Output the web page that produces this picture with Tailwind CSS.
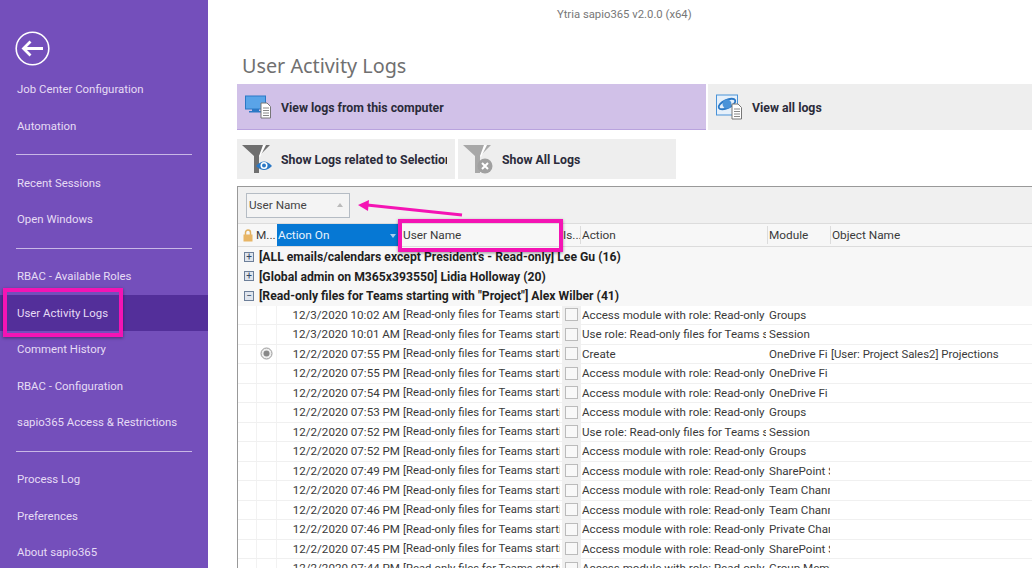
<!DOCTYPE html>
<html>

<head>
  <meta charset="utf-8">
  <script src="https://cdn.jsdelivr.net/npm/@tailwindcss/browser@4"></script>
  <title>User Activity Logs</title>
</head>

<body class="overflow-hidden">
  <div class="relative flex h-[568px] w-[1032px] overflow-hidden bg-white font-['Roboto',sans-serif] text-[11.6px] text-[#3a3a3a]">

    <!-- sidebar -->
    <div class="flex h-full w-[208px] shrink-0 flex-col overflow-hidden bg-[#744fbb] text-[11.4px] text-[#e6dcf5] *:shrink-0">
      <div class="h-[71px] pt-[31px] pl-[15px]">
        <svg width="35" height="35" viewBox="0 0 35 35" fill="none" stroke="#fff">
          <circle cx="17.5" cy="17.5" r="16.3" stroke-width="1.6" />
          <path d="M8 17.5H28M15.5 10.5L8.5 17.5L15.5 24.5" stroke-width="2.8" />
        </svg>
      </div>
      <div class="flex h-[36.5px] items-center pl-[17px]">Job Center Configuration</div>
      <div class="flex h-[36.5px] items-center pl-[17px] pt-[2px]">Automation</div>
      <div class="mx-[16px] my-[10px] h-px bg-[#c9b8e6]"></div>
      <div class="flex h-[36.5px] items-center pl-[17px]">Recent Sessions</div>
      <div class="flex h-[36.5px] items-center pl-[17px]">Open Windows</div>
      <div class="mx-[16px] mt-[10px] mb-[9px] h-px bg-[#c9b8e6]"></div>
      <div class="flex h-[36.5px] items-center pl-[17px]">RBAC - Available Roles</div>
      <div class="flex h-[36.5px] items-center bg-[#532f9a] pl-[17px] pt-[2px]">User Activity Logs</div>
      <div class="flex h-[36.5px] items-center pl-[17px]">Comment History</div>
      <div class="flex h-[36.5px] items-center pl-[17px] pt-[2px]">RBAC - Configuration</div>
      <div class="flex h-[36.5px] items-center pl-[17px]">sapio365 Access &amp; Restrictions</div>
      <div class="mx-[16px] my-[10px] h-px bg-[#c9b8e6]"></div>
      <div class="flex h-[36.5px] items-center pl-[17px]">Process Log</div>
      <div class="flex h-[36.5px] items-center pl-[17px]">Preferences</div>
      <div class="flex h-[36.5px] items-center pl-[17px]">About sapio365</div>
    </div>

    <!-- main -->
    <div class="flex min-w-0 flex-1 flex-col overflow-hidden pl-[29px] *:shrink-0">
      <div class="h-[27px] pl-[320px] pt-[7px] text-[11.3px] text-[#777]">Ytria sapio365 v2.0.0 (x64)</div>
      <div class="h-[57px] pl-[5px] pt-[26px] font-['Noto_Sans',sans-serif] text-[19.8px] leading-[26px] text-[#707070]">User Activity Logs</div>

      <div class="flex h-[46px] gap-[2px] text-[12.3px] font-bold text-[#2b2b3a]">
        <div class="flex w-[469px] shrink-0 items-center border-b border-[#b9a3de] bg-[#d1c1e8] pl-[8px]">
          <svg width="27" height="24" viewBox="0 0 27 24" class="mr-[9px]">
            <rect x="0.5" y="1" width="20" height="13" fill="#5aa4e8" stroke="#2b78c5" />
            <rect x="7" y="14" width="7" height="2" fill="#2b78c5" />
            <rect x="4" y="16" width="13" height="1.5" fill="#2b78c5" />
            <path d="M16 8H22L25.5 11.5V23H16Z" fill="#fff" stroke="#777" />
            <path d="M18 13H24M18 15.5H24M18 18H24M18 20.5H24" stroke="#888" />
          </svg>
          <span class="pt-[3px]">View logs from this computer</span>
        </div>
        <div class="flex flex-1 items-center bg-[#eeeeee] pl-[8px]">
          <svg width="27" height="26" viewBox="0 0 27 26" class="mr-[9px]">
            <rect x="0.5" y="1" width="21" height="20" fill="#e6f0fa" stroke="#4a93d8" />
            <ellipse cx="11" cy="10" rx="9" ry="4" transform="rotate(-25 11 10)" fill="none" stroke="#2b78c5" stroke-width="1.8" />
            <circle cx="11" cy="10" r="4.5" fill="#4a93d8" />
            <path d="M16 10H22L25.5 13.5V25H16Z" fill="#fff" stroke="#777" />
            <path d="M18 15H24M18 17.5H24M18 20H24M18 22.5H24" stroke="#888" />
          </svg>
          <span class="pt-[3px]">View all logs</span>
        </div>
      </div>

      <div class="mt-[9px] flex h-[40px] gap-[3px] text-[12.3px] font-bold text-[#2b2b3a]">
        <div class="flex w-[218px] items-center overflow-hidden bg-[#eeeeee] pl-[5px] pr-[8px]">
          <svg width="30" height="34" viewBox="0 0 30 34" class="mr-[9px] shrink-0">
            <path d="M0 3H28L17 14V31H12V14Z" fill="#6f6f6f" />
            <path d="M17 14L21 3H24L18 15Z" fill="#fff" />
            <path d="M14 24Q22 15 30 24Q22 32 14 24Z" fill="#2b78c5" />
            <circle cx="22" cy="23.5" r="3.5" fill="#fff" />
            <circle cx="22" cy="23.5" r="2" fill="#2b78c5" />
          </svg>
          <span class="overflow-hidden whitespace-nowrap pt-[3px]">Show Logs related to Selection</span>
        </div>
        <div class="flex w-[218px] items-center bg-[#eeeeee] pl-[5px]">
          <svg width="30" height="34" viewBox="0 0 30 34" class="mr-[9px] shrink-0">
            <path d="M0 3H28L17 14V31H12V14Z" fill="#a8a8a8" />
            <path d="M17 14L21 3H24L18 15Z" fill="#fff" />
            <circle cx="22" cy="24" r="7.5" fill="#a0a0a0" />
            <path d="M19 21L25 27M25 21L19 27" stroke="#fff" stroke-width="2" />
          </svg>
          <span class="pt-[3px]">Show All Logs</span>
        </div>
      </div>

      <!-- grid panel -->
      <div class="mt-[7px] border-t border-l border-[#999]">
        <div class="flex h-[36px] items-center bg-[#f0f0f0] pl-[8px]">
          <div class="flex h-[25px] w-[104px] items-center justify-between border border-[#b5bcc4] bg-[#f4f4f4] pl-[2px] pr-[6px] text-[11.7px] text-[#444]">
            <span class="pt-[1px]">User Name</span>
            <span class="h-0 w-0 border-x-[3.5px] border-b-[4px] border-x-transparent border-b-[#bbb]"></span>
          </div>
        </div>

        <div class="flex h-[24px] items-center border-y border-[#dcdcdc] bg-[#f7f7f7] text-[11.8px]">
          <div class="flex w-[18px] justify-center pl-[2px]">
            <svg width="10" height="13" viewBox="0 0 10 13">
              <path d="M2.5 6V3.5a2.5 2.5 0 0 1 5 0V6" fill="none" stroke="#e0b060" stroke-width="1.5" />
              <rect x="0.5" y="5.5" width="9" height="7" fill="#e8b565" />
            </svg>
          </div>
          <div class="w-[21px] pt-[1px]">M...</div>
          <div class="flex h-full w-[122px] items-center justify-between bg-[#0678d4] pl-[1px] pr-[3px] pt-[1px] text-[#e8f3fc]">
            <span>Action On</span>
            <span class="h-0 w-0 border-x-[3.5px] border-t-[4px] border-x-transparent border-t-[#a8cdee]"></span>
          </div>
          <div class="w-[164px] pl-[4px] pt-[1px]">User Name</div>
          <div class="w-[18px] overflow-hidden whitespace-nowrap border-r border-[#dcdcdc] pt-[1px]">Is...</div>
          <div class="w-[187px] border-r border-[#dcdcdc] pl-[1px] pt-[1px]">Action</div>
          <div class="w-[63px] border-r border-[#dcdcdc] pl-[1px] pt-[1px]">Module</div>
          <div class="pl-[1px] pt-[1px]">Object Name</div>
        </div>

        <div id="groups" class="text-[12.2px] font-bold text-[#1f1f1f]">
          <div class="flex h-[19.5px] items-center bg-[#f7f7f7] pl-[6px]">
            <span class="mr-[5px] flex h-[10px] w-[10px] items-center justify-center border border-[#6d7f99] bg-[#dfe5ee] text-[10px] leading-none font-normal text-[#33475f]">+</span>
            <span class="pt-[1px]">[ALL emails/calendars except President's - Read-only] Lee Gu (16)</span>
          </div>
          <div class="flex h-[19.5px] items-center bg-[#f7f7f7] pl-[6px]">
            <span class="mr-[5px] flex h-[10px] w-[10px] items-center justify-center border border-[#6d7f99] bg-[#dfe5ee] text-[10px] leading-none font-normal text-[#33475f]">+</span>
            <span class="pt-[1px]">[Global admin on M365x393550] Lidia Holloway (20)</span>
          </div>
          <div class="flex h-[19.5px] items-center bg-[#f7f7f7] pl-[6px]">
            <span class="mr-[5px] flex h-[10px] w-[10px] items-center justify-center border border-[#6d7f99] bg-[#dfe5ee] text-[10px] leading-none font-normal text-[#33475f]">&minus;</span>
            <span class="pt-[1px]">[Read-only files for Teams starting with "Project"] Alex Wilber (41)</span>
          </div>
        </div>

        <div id="rows"></div>
      </div>
    </div>

    <!-- annotations -->
    <div class="absolute left-[3px] top-[288px] h-[49px] w-[120px] border-[4px] border-[#f414b4] shadow-[0_1px_3px_rgba(0,0,0,0.4)]"></div>
    <div class="absolute left-[398px] top-[219px] h-[33px] w-[165px] border-[4px] border-[#f414b4] shadow-[0_1px_3px_rgba(0,0,0,0.4)]"></div>
    <svg class="absolute left-[355px] top-[197px]" width="112" height="22" viewBox="0 0 112 22">
      <path d="M107 18L12 8" stroke="#f414b4" stroke-width="3" />
      <path d="M3 8L14 3L13 14Z" fill="#f414b4" />
    </svg>
  </div>

  <script>
    var a = "Access module with role: Read-only";
    var u = "Use role: Read-only files for Teams s";
    var data = [
      ["12/3/2020 10:02 AM", a, "Groups"],
      ["12/3/2020 10:01 AM", u, "Session"],
      ["12/2/2020 07:55 PM", "Create", "OneDrive Fi", "[User: Project Sales2] Projections", 1],
      ["12/2/2020 07:55 PM", a, "OneDrive Fi"],
      ["12/2/2020 07:54 PM", a, "OneDrive Fi"],
      ["12/2/2020 07:53 PM", a, "Groups"],
      ["12/2/2020 07:52 PM", u, "Session"],
      ["12/2/2020 07:52 PM", a, "Groups"],
      ["12/2/2020 07:49 PM", a, "SharePoint Sites"],
      ["12/2/2020 07:46 PM", a, "Team Channels"],
      ["12/2/2020 07:46 PM", a, "Team Channels"],
      ["12/2/2020 07:46 PM", a, "Private Channels"],
      ["12/2/2020 07:45 PM", a, "SharePoint Sites"],
      ["12/2/2020 07:44 PM", a, "Group Members"]
    ];
    var radio = '<svg width="13" height="13" viewBox="0 0 13 13"><circle cx="6.5" cy="6.5" r="5.5" fill="#eee" stroke="#999"/><circle cx="6.5" cy="6.5" r="3" fill="#888"/></svg>';
    document.getElementById("rows").innerHTML = data.map(function (r) {
      return '<div class="flex h-[19.5px] items-center border-b border-[#f0f0f0]">' +
        '<div class="h-full w-[19px] shrink-0 border-r border-[#f2f2f2]"></div>' +
        '<div class="flex h-full w-[20px] shrink-0 items-center justify-center border-r border-[#f2f2f2]">' + (r[4] ? radio : '') + '</div>' +
        '<div class="w-[123px] shrink-0 overflow-hidden whitespace-nowrap pt-[1px] text-right">' + r[0] + '</div>' +
        '<div class="mr-[2px] w-[160px] shrink-0 overflow-hidden whitespace-nowrap pl-[3px] pt-[2px] text-[11.3px]">[Read-only files for Teams starting with "Project"]</div>' +
        '<div class="flex h-full w-[19px] shrink-0 items-center justify-center bg-[#f0f0f0]"><span class="h-[13px] w-[13px] border border-[#bbb] bg-[#f8f8f8]"></span></div>' +
        '<div class="mr-[2px] w-[185px] shrink-0 overflow-hidden whitespace-nowrap pl-[1px] pt-[1px]">' + r[1] + '</div>' +
        '<div class="w-[62px] shrink-0 overflow-hidden whitespace-nowrap pl-[1px] pt-[1px]">' + r[2] + '</div>' +
        '<div class="min-w-0 flex-1 whitespace-nowrap pl-[1px] pt-[1px] text-[11.4px]">' + (r[3] || '') + '</div>' +
        '</div>';
    }).join("");
  </script>
</body>

</html>
